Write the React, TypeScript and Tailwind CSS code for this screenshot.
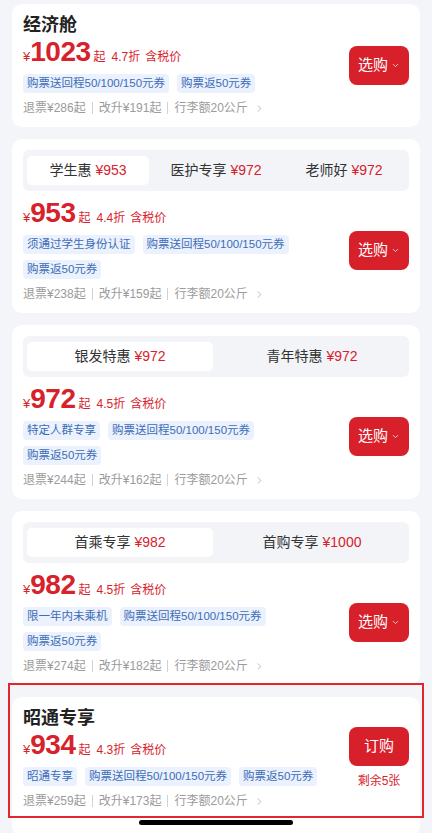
import { ChevronDown, ChevronRight } from "lucide-react";

type Tab = { name: string; price: string };

type Fare = {
  title?: string;
  tabs?: Tab[];
  price: string;
  discount: string;
  tags: string[];
  refund: string;
  change: string;
  button: string;
  remain?: string;
  marked?: boolean;
};

const fares: Fare[] = [
  {
    title: "经济舱",
    price: "1023",
    discount: "4.7折",
    tags: ["购票送回程50/100/150元券", "购票返50元券"],
    refund: "286",
    change: "191",
    button: "选购",
  },
  {
    tabs: [
      { name: "学生惠", price: "¥953" },
      { name: "医护专享", price: "¥972" },
      { name: "老师好", price: "¥972" },
    ],
    price: "953",
    discount: "4.4折",
    tags: ["须通过学生身份认证", "购票送回程50/100/150元券", "购票返50元券"],
    refund: "238",
    change: "159",
    button: "选购",
  },
  {
    tabs: [
      { name: "银发特惠", price: "¥972" },
      { name: "青年特惠", price: "¥972" },
    ],
    price: "972",
    discount: "4.5折",
    tags: ["特定人群专享", "购票送回程50/100/150元券", "购票返50元券"],
    refund: "244",
    change: "162",
    button: "选购",
  },
  {
    tabs: [
      { name: "首乘专享", price: "¥982" },
      { name: "首购专享", price: "¥1000" },
    ],
    price: "982",
    discount: "4.5折",
    tags: ["限一年内未乘机", "购票送回程50/100/150元券", "购票返50元券"],
    refund: "274",
    change: "182",
    button: "选购",
  },
  {
    title: "昭通专享",
    price: "934",
    discount: "4.3折",
    tags: ["昭通专享", "购票送回程50/100/150元券", "购票返50元券"],
    refund: "259",
    change: "173",
    button: "订购",
    remain: "剩余5张",
    marked: true,
  },
];

function Tabs({ tabs }: { tabs: Tab[] }) {
  return (
    <div className="flex gap-[6px] rounded-[6px] bg-[#f2f4f7] px-[4px] py-[6px] mb-[7px]">
      {tabs.map((t, i) => (
        <div
          key={t.name}
          className={`flex-1 h-[29px] flex items-center justify-center rounded-[5px] text-[14px] text-[#333] ${
            i === 0 ? "bg-white" : ""
          }`}
        >
          {t.name}
          <span className="ml-[4px] text-[#d7222c]">{t.price}</span>
        </div>
      ))}
    </div>
  );
}

function FareCard({ fare }: { fare: Fare }) {
  return (
    <div
      className={`relative mx-[12px] rounded-[10px] bg-white px-[11px] pb-[10px] ${
        fare.tabs ? "pt-[11px]" : "pt-[9px]"
      } ${fare.marked ? "pb-[26px]" : ""}`}
    >
      {fare.tabs && <Tabs tabs={fare.tabs} />}
      <div className="flex items-center">
        <div className="flex-1 min-w-0">
          {fare.title && (
            <div className="text-[18px] leading-[24px] font-semibold text-[#222]">{fare.title}</div>
          )}
          <div className="flex items-baseline h-[30px] text-[#d7222c]">
            <span className="text-[13px]">¥</span>
            <span className="text-[28px] leading-[30px] font-bold tracking-[-0.5px]">{fare.price}</span>
            <span className="ml-[3px] text-[12px]">起</span>
            <span className="ml-[6px] text-[12px]">{fare.discount}</span>
            <span className="ml-[5px] text-[12px]">含税价</span>
          </div>
          <div className="mt-[7px] flex flex-wrap gap-x-[8px] gap-y-[6px]">
            {fare.tags.map((tag) => (
              <span
                key={tag}
                className="h-[19px] flex items-center rounded-[4px] bg-[#ebf2fd] px-[4px] text-[11.5px] text-[#3c6cb8]"
              >
                {tag}
              </span>
            ))}
          </div>
          <div className="mt-[6px] flex items-center h-[18px] text-[12px] text-[#9b9b9b]">
            <span>退票¥{fare.refund}起</span>
            <span className="mx-[6px] h-[12px] w-px bg-[#d2d2d2]" />
            <span>改升¥{fare.change}起</span>
            <span className="mx-[6px] h-[12px] w-px bg-[#d2d2d2]" />
            <span>行李额20公斤</span>
            <ChevronRight className="ml-[6px] h-[11px] w-[11px] text-[#b5b5b5]" strokeWidth={2} />
          </div>
        </div>
        <div className="ml-[28px] w-[60px] shrink-0 flex flex-col items-center">
          <button className="h-[39px] w-[60px] rounded-[8px] bg-[#d7202a] text-white text-[15px] flex items-center justify-center">
            {fare.button}
            {!fare.remain && (
              <ChevronDown className="ml-[3px] h-[9px] w-[9px] text-white/80" strokeWidth={2.5} />
            )}
          </button>
          {fare.remain && <div className="mt-[6px] text-[12px] text-[#d7222c]">{fare.remain}</div>}
        </div>
      </div>
      {fare.marked && (
        <div className="pointer-events-none absolute -top-[14px] -left-[4px] -right-[4px] h-[135px] border-2 border-[#e3262c]" />
      )}
    </div>
  );
}

export default function App() {
  return (
    <div
      className="relative h-[833px] overflow-hidden bg-[#f3f5f9] pt-[4px]"
      style={{ fontFamily: '"Liberation Sans", "Noto Sans CJK SC", sans-serif' }}
    >
      <div className="flex flex-col gap-[12px]">
        {fares.map((f) => (
          <FareCard key={f.price} fare={f} />
        ))}
      </div>
      {/* home indicator */}
      <div className="absolute bottom-[8px] left-[139px] h-[5px] w-[154px] rounded-full bg-black" />
    </div>
  );
}
